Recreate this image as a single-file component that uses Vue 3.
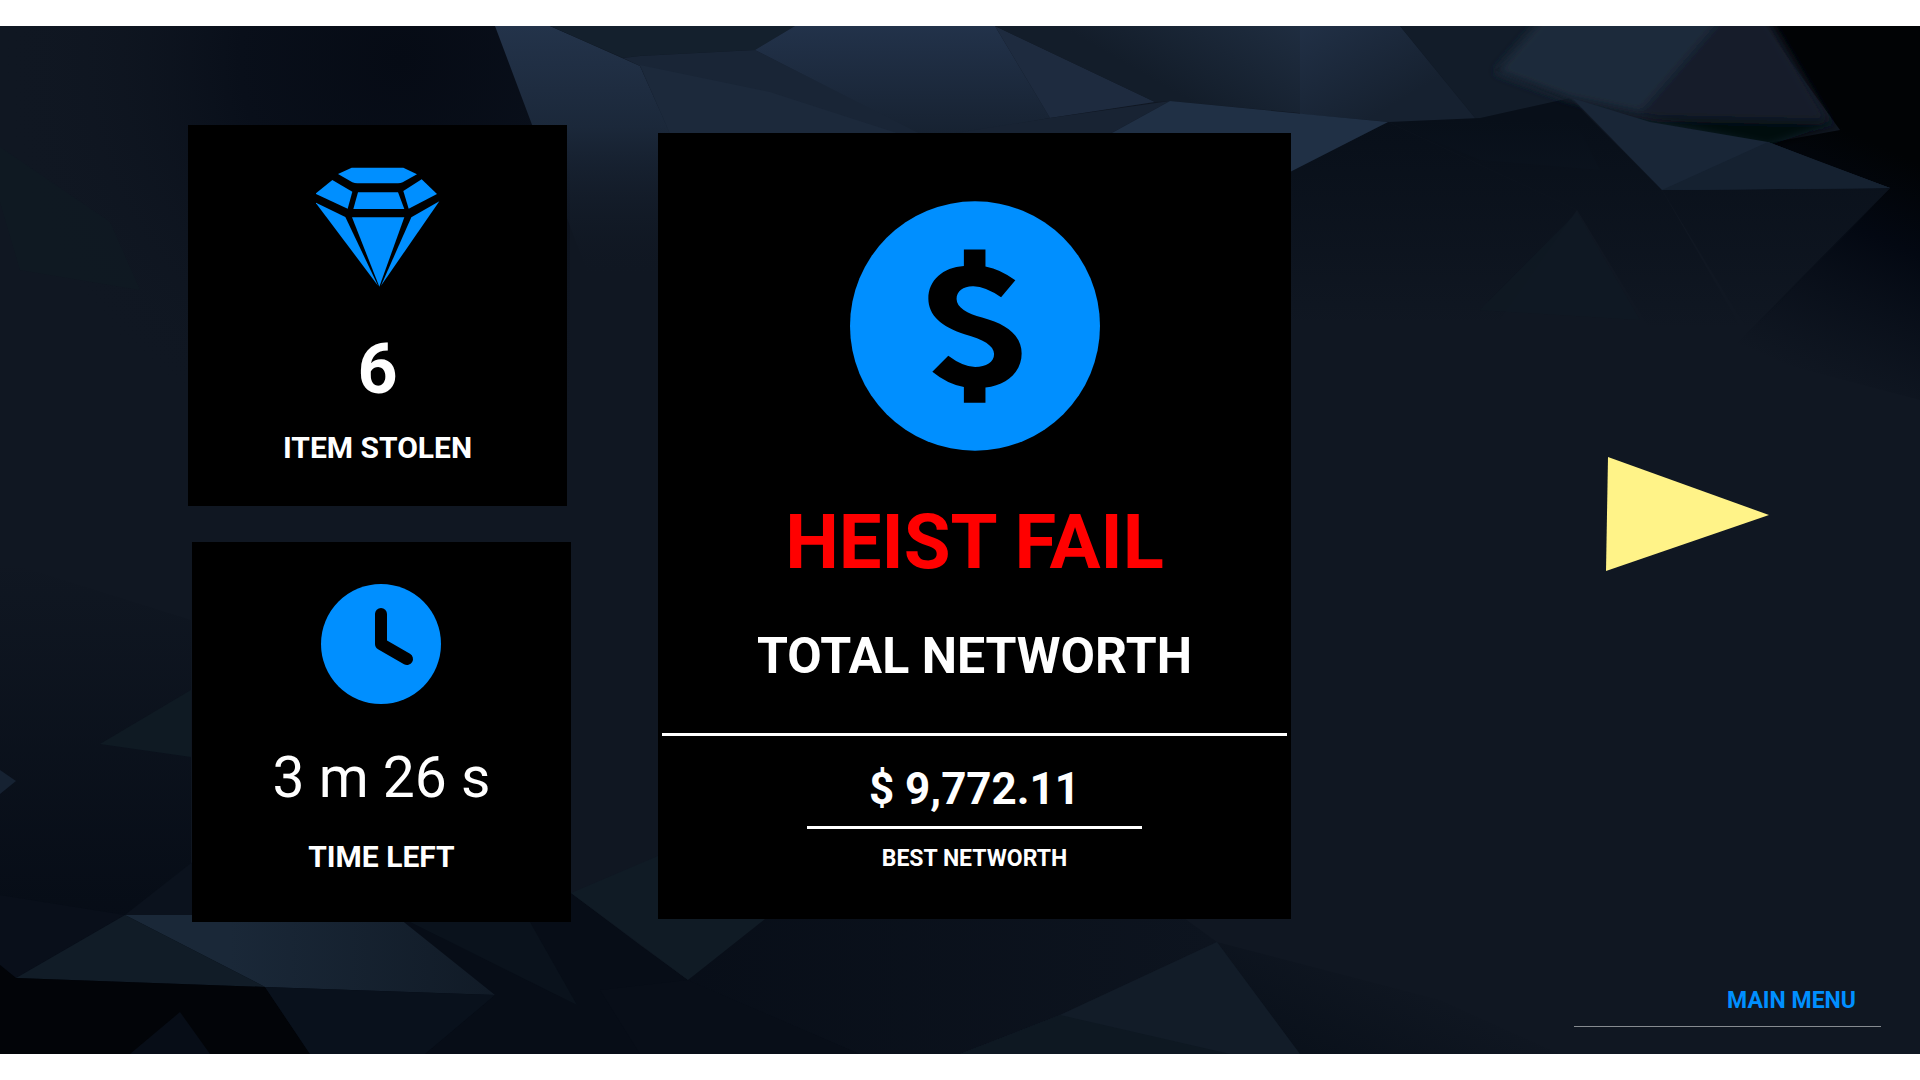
<script setup>
const stats = [
  { id: 'items', icon: 'diamond', value: '6', label: 'ITEM STOLEN' },
  { id: 'time', icon: 'clock', value: '3 m 26 s', label: 'TIME LEFT' },
]
</script>

<template>
  <div class="page">
    <main class="stage">
      <svg class="backdrop" viewBox="0 26 1920 1028" preserveAspectRatio="none" aria-hidden="true">
        <defs>
          <linearGradient id="facetFade" gradientUnits="userSpaceOnUse" x1="0" y1="26" x2="0" y2="280">
            <stop offset="0" stop-color="#23334a" />
            <stop offset="0.4" stop-color="#1b283a" />
            <stop offset="1" stop-color="#101722" stop-opacity="0" />
          </linearGradient>
          <linearGradient id="facetTop" gradientUnits="userSpaceOnUse" x1="0" y1="26" x2="0" y2="140">
            <stop offset="0" stop-color="#22324a" />
            <stop offset="1" stop-color="#162130" />
          </linearGradient>
          <linearGradient id="facetDark" gradientUnits="userSpaceOnUse" x1="1300" y1="26" x2="1240" y2="130">
            <stop offset="0" stop-color="#1f2d40" />
            <stop offset="1" stop-color="#131d2a" />
          </linearGradient>
          <linearGradient id="facetEast" gradientUnits="userSpaceOnUse" x1="1300" y1="26" x2="1360" y2="125">
            <stop offset="0" stop-color="#213046" />
            <stop offset="1" stop-color="#162130" />
          </linearGradient>
          <linearGradient id="duskDown" gradientUnits="userSpaceOnUse" x1="0" y1="120" x2="0" y2="330">
            <stop offset="0" stop-color="#080f19" />
            <stop offset="1" stop-color="#080f19" stop-opacity="0" />
          </linearGradient>
          <linearGradient id="nightRight" gradientUnits="userSpaceOnUse" x1="1890" y1="150" x2="1790" y2="370">
            <stop offset="0" stop-color="#010305" />
            <stop offset="0.35" stop-color="#030812" />
            <stop offset="1" stop-color="#060c17" stop-opacity="0" />
          </linearGradient>
          <linearGradient id="duskUp" gradientUnits="userSpaceOnUse" x1="0" y1="560" x2="0" y2="940">
            <stop offset="0" stop-color="#060c16" stop-opacity="0" />
            <stop offset="1" stop-color="#060c16" />
          </linearGradient>
          <linearGradient id="shard" gradientUnits="userSpaceOnUse" x1="230" y1="0" x2="490" y2="0">
            <stop offset="0" stop-color="#1a2838" />
            <stop offset="1" stop-color="#111b27" />
          </linearGradient>
          <linearGradient id="floor" gradientUnits="userSpaceOnUse" x1="600" y1="0" x2="1215" y2="0">
            <stop offset="0" stop-color="#070d17" />
            <stop offset="1" stop-color="#0d141f" />
          </linearGradient>
          <linearGradient id="floorRight" gradientUnits="userSpaceOnUse" x1="1270" y1="1054" x2="1330" y2="930">
            <stop offset="0" stop-color="#09101a" />
            <stop offset="1" stop-color="#09101a" stop-opacity="0" />
          </linearGradient>
          <radialGradient id="nightLeft" gradientUnits="userSpaceOnUse" cx="400" cy="60" r="400">
            <stop offset="0" stop-color="#060b15" />
            <stop offset="0.4" stop-color="#090f1a" />
            <stop offset="1" stop-color="#101722" stop-opacity="0" />
          </radialGradient>
          <filter id="soft" x="-10%" y="-10%" width="120%" height="120%">
            <feGaussianBlur stdDeviation="5" />
          </filter>
        </defs>

        <rect y="26" width="1920" height="1028" fill="#101722" />
        <rect y="26" width="570" height="460" fill="url(#nightLeft)" />
        <polygon points="0,147 110,222 140,290 20,270 0,202" fill="#0f1a23" opacity="0.6" />

        <polygon points="495,26 550,26 640,66 670,133 700,290 594,290" fill="url(#facetFade)" />
        <polygon points="550,26 795,26 755,50 640,56 623,58" fill="#14202d" />
        <polygon points="623,58 640,56 755,50 920,133 670,133 640,66" fill="#192536" />
        <polygon points="640,65 770,92 900,134 670,134" fill="#1c293b" />
        <polygon points="755,50 795,26 995,26 1050,118 960,134 920,134" fill="url(#facetTop)" />
        <polygon points="995,26 1155,102 1050,118" fill="#1e2b3f" />
        <polygon points="1050,118 1170,101 1110,134 950,134" fill="#182333" />
        <polygon points="995,26 1310,26 1310,114 1170,101 1155,102" fill="url(#facetDark)" />
        <polygon points="1300,26 1400,26 1480,124 1390,122 1300,114" fill="url(#facetEast)" />
        <polygon points="1400,26 1560,26 1495,70 1565,100 1600,170 1480,160 1388,122 1480,124" fill="#121c29" />
        <polygon points="1388,122 1480,118 1570,98 1662,190 1760,360 1650,330 1577,210" fill="url(#duskDown)" />
        <polygon points="1388,122 1577,210 1500,320 1290,320 1290,171" fill="url(#duskDown)" />
        <polygon points="1170,101 1388,122 1290,172 1290,134 1110,134" fill="#203045" />
        <polygon points="1577,212 1640,320 1480,310" fill="#0f1a23" opacity="0.7" />

        <polygon points="1765,26 1920,26 1920,400 1730,350 1890,188 1768,143 1840,130" fill="url(#nightRight)" />
        <polygon points="1662,190 1890,188 1750,335" fill="url(#duskDown)" />
        <g filter="url(#soft)">
          <polygon points="1545,14 1766,14 1832,126 1700,128 1570,100 1495,72" fill="#121c29" />
          <polygon points="1545,14 1725,14 1640,112 1570,98 1495,72" fill="#1c2a3b" />
          <polygon points="1640,118 1838,122 1768,146" fill="#050910" />
        </g>
        <polygon points="1572,98 1650,122 1768,142 1820,162 1890,188 1662,190" fill="#192637" />
        <polygon points="1768,142 1890,188 1662,190" fill="#152130" />

        <polygon points="0,560 191,620 191,930 620,930 640,1054 0,1054" fill="url(#duskUp)" />
        <polygon points="100,744 191,690 191,757" fill="#0f1a23" />
        <polygon points="0,770 16,781 0,794" fill="#162232" />
        <polygon points="0,895 125,915 16,978 0,965" fill="#090f1a" />
        <polygon points="125,915 195,860 195,915" fill="#0b121d" />
        <polygon points="391,915 571,893 640,945 688,980 860,1054 425,1054 495,995" fill="#070d17" />
        <polygon points="410,922 530,922 577,1005" fill="#0a121c" />
        <polygon points="125,915 395,915 495,995 265,987" fill="url(#shard)" />
        <polygon points="125,915 265,987 16,978" fill="#111c27" />
        <polygon points="0,965 16,978 265,987 310,1054 0,1054" fill="#020408" />
        <polygon points="265,987 495,995 425,1054 310,1054" fill="#09111c" />
        <polygon points="180,1012 210,1054 130,1054" fill="#070d17" />
        <polygon points="571,893 660,855 780,915 688,980" fill="#101b25" />
        <polygon points="688,980 770,915 1180,915 1217,942 1060,1015 960,1054 860,1054" fill="url(#floor)" />
        <polygon points="688,980 860,1054 640,1054 600,990" fill="#080e18" />
        <polygon points="1217,942 1440,1000 1560,1054 1290,1054" fill="url(#floorRight)" />
        <polygon points="1217,942 1300,1054 960,1054 1060,1015" fill="#121c28" />
        <polygon points="1060,1015 1230,1054 960,1054" fill="#0e1822" />
      </svg>

      <div class="board">
        <section class="stats">
          <article v-for="stat in stats" :key="stat.id" class="card stat" :class="stat.id">
            <svg v-if="stat.icon === 'diamond'" class="stat-icon" viewBox="48 52 372 360" aria-hidden="true">
              <g fill="#008fff">
                <path d="M155 54H310L351 74L308 98Q302 101 294 101H172Q164 101 157 98L114 73Z" />
                <path d="M97 91L157 126L143 177L46 132Z" />
                <path d="M365 89L411 133L326 177L310 124Z" />
                <path d="M174 128H294L313 178H160Z" />
                <path d="M46 158L136 202L234 408Z" />
                <path d="M156 203H313L238 411Z" />
                <path d="M418 155L334 203L243 408Z" />
              </g>
            </svg>
            <svg v-else class="stat-icon" viewBox="0 0 124 120" aria-hidden="true">
              <circle cx="62" cy="60" r="60" fill="#008fff" />
              <path d="M62 30V60L88 75" fill="none" stroke="#000" stroke-width="12" stroke-linecap="round" stroke-linejoin="round" />
            </svg>
            <p class="stat-value">{{ stat.value }}</p>
            <h2 class="stat-label">{{ stat.label }}</h2>
          </article>
        </section>

        <section class="card result">
          <svg class="coin" viewBox="27 32 753 751" aria-hidden="true">
            <ellipse cx="403.5" cy="407.5" rx="376.5" ry="375.5" fill="#008fff" />
            <path
              d="M370 177H435V228Q482 237 525 270L482 321Q435 289 399 288C369 287 348 302 348 326C348 352 380 370 425 382C500 402 544 437 544 490C544 545 500 585 435 593V639H370V591Q320 582 275 545L323 497Q367 530 404 531C437 531 461 517 461 492C461 466 428 447 372 432C302 411 263 375 263 325C263 270 307 231 370 227Z"
            />
          </svg>
          <h1 class="verdict">HEIST FAIL</h1>
          <h2 class="total">TOTAL NETWORTH</h2>
          <hr class="rule rule-wide" />
          <p class="amount">$ 9,772.11</p>
          <hr class="rule rule-short" />
          <p class="best">BEST NETWORTH</p>
        </section>

        <button class="next" type="button" aria-label="Next">
          <svg viewBox="0 0 163 114" aria-hidden="true">
            <polygon points="2,0 163,58 0,114" fill="#fff388" />
          </svg>
        </button>
      </div>

      <nav class="menu">
        <a class="menu-link" href="#">MAIN MENU</a>
      </nav>
    </main>
  </div>
</template>

<style>
body {
  margin: 0;
  background: #fff;
}
</style>

<style scoped>
.page {
  box-sizing: border-box;
  min-height: 100vh;
  padding: 26px 0;
  display: flex;
  background: #fff;
  color: #fff;
  font-family: Roboto, "Liberation Sans", sans-serif;
  font-weight: 700;
}

.stage {
  position: relative;
  flex: 1;
  display: flex;
  flex-direction: column;
  justify-content: space-between;
  overflow: hidden;
  background: #101722;
}

.backdrop {
  position: absolute;
  inset: 0;
  width: 100%;
  height: 100%;
}

.board {
  position: relative;
  display: grid;
  grid-template-columns:
    minmax(0, 188fr) minmax(0, 383fr) minmax(0, 87fr) minmax(0, 633fr)
    minmax(0, 315fr) minmax(0, 163fr) minmax(0, 151fr);
  align-items: start;
  padding-top: 99px;
}

.card {
  box-sizing: border-box;
  display: flex;
  flex-direction: column;
  align-items: center;
  background: #000;
  text-align: center;
}

.stats {
  grid-column: 2;
  display: flex;
  flex-direction: column;
  gap: 36px;
}

.stat {
  width: 99%;
  min-height: 380px;
  padding: 42px 0 38px;
}

.time {
  align-self: flex-end;
}

.stat-icon {
  width: 124px;
  height: 120px;
}

.stat-value,
.stat-label,
.verdict,
.total,
.amount,
.best {
  margin: 0;
}

.stat-value {
  margin-top: 42px;
  font-size: 70px;
  line-height: 80px;
}

.time .stat-value {
  margin-top: 34px;
  font-size: 57px;
  font-weight: 400;
}

.stat-label {
  margin-top: 19px;
  font-size: 30px;
  line-height: 40px;
}

.result {
  grid-column: 4;
  margin-top: 8px;
  padding: 68px 4px 45px;
}

.coin {
  width: 250px;
  height: 250px;
}

.verdict {
  margin-top: 46px;
  font-size: 76px;
  line-height: 90px;
  color: #f00;
}

.total {
  margin-top: 39px;
  font-size: 50px;
  line-height: 60px;
}

.rule {
  height: 3px;
  border: 0;
  background: #fff;
}

.rule-wide {
  width: 100%;
  margin: 47px 0 23px;
}

.rule-short {
  width: 335px;
  margin: 7px 0 15px;
}

.amount {
  font-size: 44px;
  line-height: 60px;
}

.best {
  font-size: 23px;
  line-height: 30px;
}

.next {
  grid-column: 6;
  align-self: center;
  margin-bottom: 20px;
  padding: 0;
  border: 0;
  background: none;
  cursor: pointer;
}

.next svg {
  display: block;
  width: 100%;
}

.menu {
  position: relative;
  align-self: flex-end;
  box-sizing: border-box;
  width: 16%;
  margin: 0 39px 27px 0;
  padding: 0 25px 10px 0;
  border-bottom: 1px solid #868b90;
  text-align: right;
}

.menu-link {
  display: block;
  font-size: 23px;
  line-height: 30px;
  color: #008fff;
  text-decoration: none;
}
</style>
